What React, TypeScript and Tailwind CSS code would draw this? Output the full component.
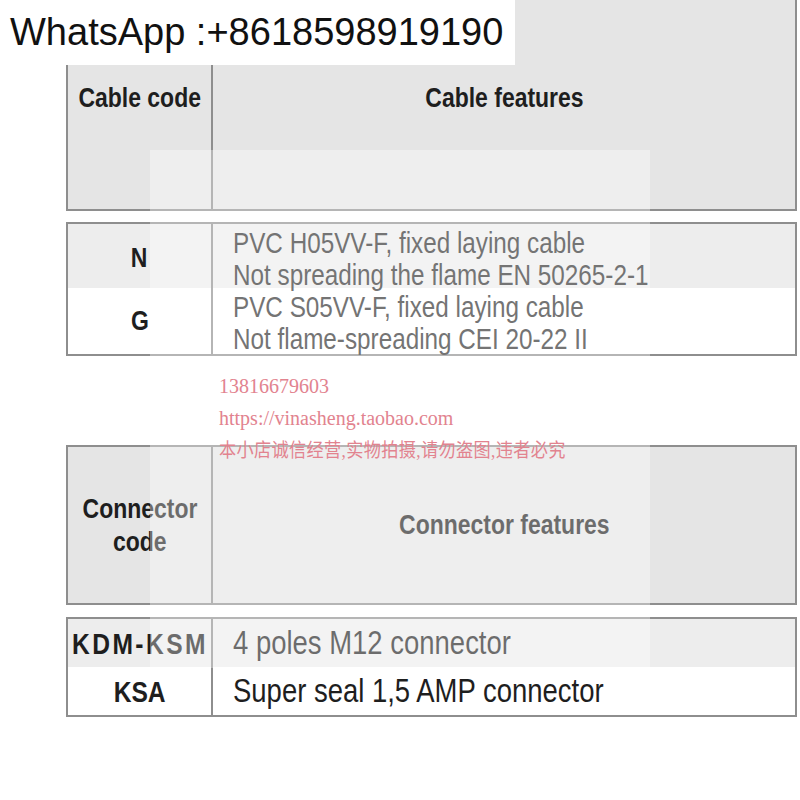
import React from "react";

const sans = "font-['Liberation_Sans',Arial,sans-serif]";

function NC({ children, left }: { children: React.ReactNode; left?: boolean }) {
  return (
    <span
      className={
        left
          ? "inline-block whitespace-nowrap scale-x-[0.82] origin-left"
          : "inline-block whitespace-nowrap scale-x-[0.82] origin-center"
      }
    >
      {children}
    </span>
  );
}

function Cm() {
  return <span className="font-['Liberation_Serif',serif]">,</span>;
}

export default function App() {
  return (
    <div className={`relative w-[800px] h-[800px] overflow-hidden bg-white text-[#1e1e1e] ${sans}`}>
      <div className="flex flex-col pl-[66px]">
        {/* Header 1 */}
        <div className="mt-[-13px] flex h-[224px] w-[731px] border-x-2 border-b-2 border-[#8e8e8e] bg-[#e5e5e5]">
          <div className="flex w-[145px] shrink-0 items-center justify-center border-r-2 border-[#8e8e8e] text-[28px] font-bold">
            <NC>Cable code</NC>
          </div>
          <div className="flex flex-1 items-center justify-center text-[28px] font-bold">
            <NC>Cable features</NC>
          </div>
        </div>

        {/* Table 2 */}
        <div className="mt-[11px] flex h-[134px] w-[731px] flex-col border-2 border-[#8e8e8e]">
          <div className="flex h-[64px] bg-[#ededed]">
            <div className="flex w-[145px] shrink-0 items-center justify-center border-r-2 border-[#8e8e8e] pt-[4px] text-[28px] font-bold">
              <NC>N</NC>
            </div>
            <div className="pl-[20px] pt-[3px] text-[29.6px] leading-[32px] text-[#2a2a2a]">
              <div><NC left>PVC H05VV-F, fixed laying cable</NC></div>
              <div><NC left>Not spreading the flame EN 50265-2-1</NC></div>
            </div>
          </div>
          <div className="flex h-[66px]">
            <div className="flex w-[145px] shrink-0 items-center justify-center border-r-2 border-[#8e8e8e] text-[28px] font-bold">
              <NC>G</NC>
            </div>
            <div className="pl-[20px] pt-[3px] text-[29.6px] leading-[32px] text-[#2a2a2a]">
              <div><NC left>PVC S05VV-F, fixed laying cable</NC></div>
              <div><NC left>Not flame-spreading CEI 20-22 II</NC></div>
            </div>
          </div>
        </div>

        {/* Header 2 */}
        <div className="mt-[89px] flex h-[160px] w-[731px] border-2 border-[#8e8e8e] bg-[#e5e5e5]">
          <div className="flex w-[145px] shrink-0 flex-col items-center justify-center border-r-2 border-[#8e8e8e] text-[28px] font-bold leading-[33px]">
            <NC>Connector</NC>
            <NC>code</NC>
          </div>
          <div className="flex flex-1 items-center justify-center text-[28px] font-bold">
            <NC>Connector features</NC>
          </div>
        </div>

        {/* Table 4 */}
        <div className="mt-[12px] flex h-[100px] w-[731px] flex-col border-2 border-[#8e8e8e]">
          <div className="flex h-[48px] bg-[#ededed]">
            <div className="flex w-[145px] shrink-0 items-center justify-center border-r-2 border-[#8e8e8e] text-[30px] font-bold tracking-[3px]">
              <NC>KDM-KSM</NC>
            </div>
            <div className="flex items-center pl-[20px] text-[33.5px]">
              <NC left>4 poles M12 connector</NC>
            </div>
          </div>
          <div className="flex h-[48px]">
            <div className="flex w-[145px] shrink-0 items-center justify-center border-r-2 border-[#8e8e8e] text-[30px] font-bold">
              <NC>KSA</NC>
            </div>
            <div className="flex items-center pl-[20px] text-[33.5px]">
              <NC left>Super seal 1,5 AMP connector</NC>
            </div>
          </div>
        </div>
      </div>

      {/* Watermark veil */}
      <div className="absolute left-[150px] top-[150px] h-[518px] w-[500px] bg-white/35" />

      {/* Watermark text */}
      <div className="absolute left-[219px] top-[370px] font-['Liberation_Serif','Noto_Sans_CJK_SC',serif] text-[20px] leading-[32px] text-[#e2838f]">
        <div>13816679603</div>
        <div>https://vinasheng.taobao.com</div>
        <div>
          <span className="inline-block origin-left scale-x-[0.88] whitespace-nowrap text-[19.5px] tracking-[0.4px]">
            本小店诚信经营<Cm />实物拍摄<Cm />请勿盗图<Cm />违者必究
          </span>
        </div>
      </div>

      {/* WhatsApp banner */}
      <div className="absolute left-0 top-0 h-[65px] w-[515px] bg-white pl-[10px] pt-[13px] text-[38px] leading-[38px] text-[#111]">
        WhatsApp :+8618598919190
      </div>
    </div>
  );
}
